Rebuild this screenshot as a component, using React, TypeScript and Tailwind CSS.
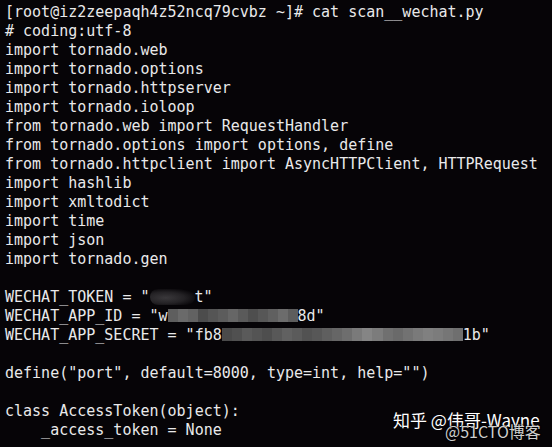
import React from "react";

const mono = { fontFamily: '"DejaVu Sans Mono", "Liberation Mono", monospace' };

function Mosaic({ colors, width }: { colors: string[]; width: number }) {
  return (
    <span
      className="inline-flex h-[13px] align-[-1px] overflow-hidden"
      style={{ width }}
    >
      {colors.map((c, i) => (
        <span key={i} className="h-full flex-1" style={{ backgroundColor: c }} />
      ))}
    </span>
  );
}

export default function App() {
  const lines1 = [
    "[root@iz2zeepaqh4z52ncq79cvbz ~]# cat scan__wechat.py",
    "# coding:utf-8",
    "import tornado.web",
    "import tornado.options",
    "import tornado.httpserver",
    "import tornado.ioloop",
    "from tornado.web import RequestHandler",
    "from tornado.options import options, define",
    "from tornado.httpclient import AsyncHTTPClient, HTTPRequest",
    "import hashlib",
    "import xmltodict",
    "import time",
    "import json",
    "import tornado.gen",
    "",
  ];
  const idColors = [
    "#5e5e5e", "#6a6a6a", "#626262", "#4c4c4c", "#555555", "#5c5c5c", "#666666",
    "#5a5a5a", "#4e4e4e", "#575757", "#606060", "#6c6c6c", "#5d5d5d",
  ];
  const secColors = [
    "#4a4a4a", "#505050", "#5a5a5a", "#545454", "#4e4e4e", "#585858", "#616161",
    "#5b5b5b", "#525252", "#575757", "#5f5f5f", "#666666", "#6e6e6e", "#7a7a7a",
    "#858585", "#7c7c7c", "#707070", "#6a6a6a", "#727272", "#7a7a7a", "#808080",
    "#7c7c7c", "#767676", "#6f6f6f",
  ];
  return (
    <div className="relative w-[552px] h-[447px] overflow-hidden bg-[#060407] text-[#e9e9ea]">
      <div
        className="pl-[5px] pt-[3px] text-[15px] leading-[19px] whitespace-pre"
        style={mono}
      >
        {lines1.map((l, i) => (
          <div key={i} className="h-[19px]">
            {l}
          </div>
        ))}
        <div className="h-[19px]">
          {'WECHAT_TOKEN = "'}
          <span className="inline-block w-[45px] h-[16px] align-[-3px] rounded-full bg-[radial-gradient(ellipse_at_35%_55%,#3a383b_0%,#242225_45%,#060407_80%)]" />
          {'t"'}
        </div>
        <div className="h-[19px]">
          {'WECHAT_APP_ID = "w'}
          <Mosaic colors={idColors} width={130} />
          {'8d"'}
        </div>
        <div className="h-[19px]">
          {'WECHAT_APP_SECRET = "fb8'}
          <Mosaic colors={secColors} width={241} />
          {'1b"'}
        </div>
        <div className="h-[19px]"></div>
        <div className="h-[19px]">{'define("port", default=8000, type=int, help="")'}</div>
        <div className="h-[19px]"></div>
        <div className="h-[19px]">{"class AccessToken(object):"}</div>
        <div className="h-[19px]">{"    _access_token = None"}</div>
      </div>
      <div
        className="absolute left-[393px] top-[409px] text-[17px] leading-[22px] text-white whitespace-nowrap"
        style={{ fontFamily: '"Noto Sans CJK SC", "Noto Sans", sans-serif' }}
      >
        知乎 @伟哥-Wayne
      </div>
      <div
        className="absolute left-[445px] top-[420px] text-[16px] leading-[22px] text-[#cfcfcf] whitespace-nowrap [text-shadow:0_0_2px_#000,0_0_1px_#000]"
        style={{ fontFamily: '"Noto Sans CJK SC", "Noto Sans", sans-serif' }}
      >
        @51CTO博客
      </div>
    </div>
  );
}
